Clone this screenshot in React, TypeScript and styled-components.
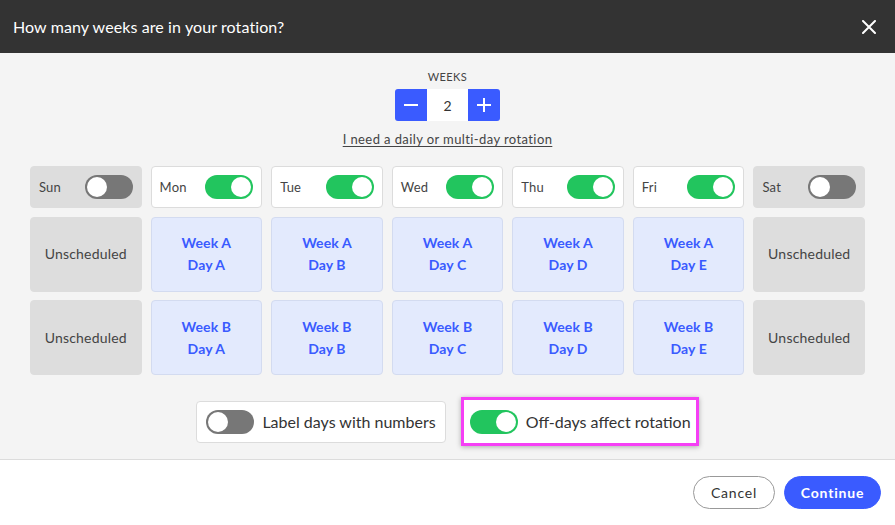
import React from "react";
import styled, { createGlobalStyle, css } from "styled-components";

const Global = createGlobalStyle`
  html, body { margin: 0; padding: 0; background: #fff; }
  body { font-family: Lato, "Open Sans", sans-serif; color: #333; -webkit-font-smoothing: antialiased; }
  * { box-sizing: border-box; }
`;

const BLUE = "#3a5bff";
const GREEN = "#22c55e";

const Modal = styled.div`
  width: 895px;
  height: 525px;
  display: flex;
  flex-direction: column;
  background: #fff;
`;

const Header = styled.div`
  height: 53px;
  background: #333333;
  display: flex;
  align-items: center;
  justify-content: space-between;
  padding: 0 18px 0 13px;
  color: #fff;
`;

const Title = styled.h1`
  margin: 0;
  font-size: 16px;
  font-weight: 400;
  letter-spacing: 0.1px;
`;

const CloseBtn = styled.button`
  background: none;
  border: 0;
  padding: 0;
  width: 16px;
  height: 16px;
  display: flex;
  align-items: center;
  justify-content: center;
  cursor: pointer;
`;

const Body = styled.div`
  background: #f4f4f4;
  padding: 17px 30px 13px;
  display: flex;
  flex-direction: column;
  align-items: center;
  border-bottom: 1px solid #dcdcdc;
`;

const WeeksLabel = styled.div`
  font-size: 11px;
  line-height: 14px;
  letter-spacing: 0.4px;
  color: #444;
  text-transform: uppercase;
`;

const Stepper = styled.div`
  margin-top: 5px;
  display: flex;
  height: 32px;
  border-radius: 3px;
  overflow: hidden;
`;

const StepBtn = styled.button`
  width: 32px;
  height: 32px;
  border: 0;
  padding: 0;
  background: ${BLUE};
  display: flex;
  align-items: center;
  justify-content: center;
`;

const StepValue = styled.div`
  width: 41px;
  background: #fff;
  display: flex;
  align-items: center;
  justify-content: center;
  font-size: 14px;
  color: #333;
`;

const RotationLink = styled.a`
  margin-top: 9px;
  font-size: 13px;
  line-height: 18px;
  color: #444;
  text-decoration: underline;
  text-underline-offset: 2px;
  letter-spacing: 0.4px;
`;

const Grid = styled.div`
  margin-top: 18px;
  width: 100%;
  display: grid;
  grid-template-columns: repeat(7, 1fr);
  grid-template-rows: 42px 75px 75px;
  column-gap: 9px;
  row-gap: 8.5px;
`;

const DayHeader = styled.div<{ $on: boolean }>`
  border-radius: 4px;
  display: flex;
  align-items: center;
  justify-content: space-between;
  padding: 0 8px 0 8px;
  font-size: 13px;
  color: #444;
  letter-spacing: 0.2px;
  ${(p) =>
    p.$on
      ? css`
          background: #fff;
          border: 1px solid #dcdcdc;
        `
      : css`
          background: #dddddd;
          border: 1px solid #dddddd;
        `}
`;

const Track = styled.span<{ $on: boolean }>`
  width: 48px;
  height: 24px;
  border-radius: 12px;
  padding: 2px;
  display: inline-flex;
  flex-shrink: 0;
  justify-content: ${(p) => (p.$on ? "flex-end" : "flex-start")};
  background: ${(p) => (p.$on ? GREEN : "#777")};
`;

const Knob = styled.span`
  width: 20px;
  height: 20px;
  border-radius: 50%;
  background: #fff;
`;

const Cell = styled.div<{ $on: boolean }>`
  border-radius: 4px;
  display: flex;
  flex-direction: column;
  align-items: center;
  justify-content: center;
  font-size: 14px;
  line-height: 22px;
  ${(p) =>
    p.$on
      ? css`
          background: #e3eafd;
          border: 1px solid #d3dbf0;
          color: ${BLUE};
          font-weight: 700;
          letter-spacing: 0.1px;
        `
      : css`
          background: #dddddd;
          border: 1px solid #dddddd;
          color: #444;
          letter-spacing: 0.2px;
        `}
`;

const Options = styled.div`
  margin-top: 22px;
  display: flex;
  align-items: center;
  gap: 15px;
`;

const Option = styled.div<{ $highlight?: boolean }>`
  display: flex;
  align-items: center;
  gap: 8px;
  background: #fff;
  font-size: 16px;
  color: #333;
  ${(p) =>
    p.$highlight
      ? css`
          height: 49px;
          padding: 0 5px 0 6px;
          border: 3px solid #f53ff5;
          box-shadow: 0 1px 5px rgba(0, 0, 0, 0.3);
        `
      : css`
          height: 42px;
          padding: 0 9px 0 9px;
          border: 1px solid #dcdcdc;
          border-radius: 4px;
        `}
`;

const Footer = styled.div`
  flex: 1;
  display: flex;
  align-items: center;
  justify-content: flex-end;
  gap: 9px;
  padding: 0 14px;
  background: #fff;
`;

const PillButton = styled.button<{ $primary?: boolean }>`
  height: 33px;
  border-radius: 17px;
  font-family: inherit;
  font-size: 14px;
  letter-spacing: 0.8px;
  cursor: pointer;
  ${(p) =>
    p.$primary
      ? css`
          width: 97px;
          background: ${BLUE};
          border: 1px solid ${BLUE};
          color: #fff;
          font-weight: 700;
        `
      : css`
          width: 82px;
          background: #fff;
          border: 1px solid #999;
          color: #333;
        `}
`;

function Toggle({ on }: { on: boolean }) {
  return (
    <Track $on={on}>
      <Knob />
    </Track>
  );
}

const days = [
  { name: "Sun", on: false },
  { name: "Mon", on: true },
  { name: "Tue", on: true },
  { name: "Wed", on: true },
  { name: "Thu", on: true },
  { name: "Fri", on: true },
  { name: "Sat", on: false },
];

export default function App() {
  const letters = ["A", "B", "C", "D", "E"];
  const weeks = ["A", "B"];
  return (
    <>
      <Global />
      <Modal>
        <Header>
          <Title>How many weeks are in your rotation?</Title>
          <CloseBtn aria-label="Close">
            <svg width="14" height="14" viewBox="0 0 14 14">
              <path d="M1 1L13 13M13 1L1 13" stroke="#fff" strokeWidth="2" strokeLinecap="round" />
            </svg>
          </CloseBtn>
        </Header>
        <Body>
          <WeeksLabel>Weeks</WeeksLabel>
          <Stepper>
            <StepBtn aria-label="Decrease">
              <svg width="16" height="16" viewBox="0 0 16 16">
                <path d="M1 8H15" stroke="#fff" strokeWidth="2" />
              </svg>
            </StepBtn>
            <StepValue>2</StepValue>
            <StepBtn aria-label="Increase">
              <svg width="16" height="16" viewBox="0 0 16 16">
                <path d="M1 8H15M8 1V15" stroke="#fff" strokeWidth="2" />
              </svg>
            </StepBtn>
          </Stepper>
          <RotationLink>I need a daily or multi-day rotation</RotationLink>
          <Grid>
            {days.map((d) => (
              <DayHeader key={d.name} $on={d.on}>
                <span>{d.name}</span>
                <Toggle on={d.on} />
              </DayHeader>
            ))}
            {weeks.map((w) => {
              let i = 0;
              return days.map((d) => {
                if (!d.on) {
                  return (
                    <Cell key={w + d.name} $on={false}>
                      Unscheduled
                    </Cell>
                  );
                }
                const l = letters[i++];
                return (
                  <Cell key={w + d.name} $on>
                    <span>Week {w}</span>
                    <span>Day {l}</span>
                  </Cell>
                );
              });
            })}
          </Grid>
          <Options>
            <Option>
              <Toggle on={false} />
              <span>Label days with numbers</span>
            </Option>
            <Option $highlight>
              <Toggle on />
              <span>Off-days affect rotation</span>
            </Option>
          </Options>
        </Body>
        <Footer>
          <PillButton>Cancel</PillButton>
          <PillButton $primary>Continue</PillButton>
        </Footer>
      </Modal>
    </>
  );
}
